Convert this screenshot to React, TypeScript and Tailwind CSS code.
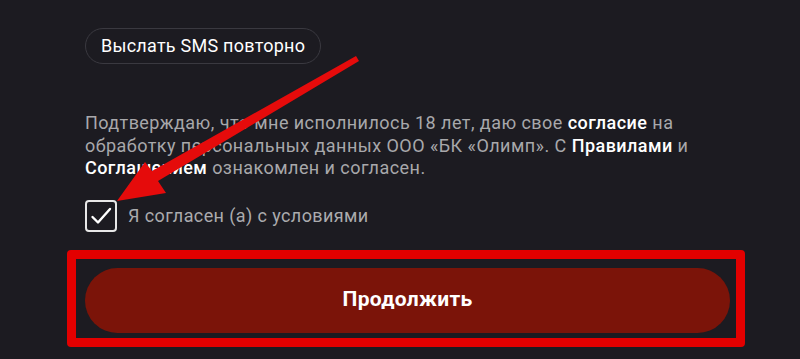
import React, { useState } from 'react';

// Tapered annotation arrow pointing at the checkbox
function AnnotationArrow() {
  return (
    <svg
      className="absolute inset-0 pointer-events-none"
      width="800"
      height="359"
      viewBox="0 0 800 359"
    >
      <polygon
        fill="#e50b0b"
        points="356,56 359,61 158,181 166,193 117,201 145,162 152,171"
      />
    </svg>
  );
}

export default function App() {
  const [agreed, setAgreed] = useState(true);

  return (
    <div className="relative w-full min-h-screen bg-[#1c1b21] font-['Roboto','Liberation_Sans',sans-serif] overflow-hidden">
      <div className="flex flex-col w-[645px] ml-[85px] pt-[28px]">
        <div>
          <button className="h-[36px] px-[15px] rounded-full border border-[#3a3940] text-white text-[18px] tracking-[0.25px] leading-none">
            Выслать SMS повторно
          </button>
        </div>

        <p className="mt-[48px] text-[18px] tracking-[0.45px] leading-[22.5px] text-[#a8a8ab]">
          Подтверждаю, что мне исполнилось 18 лет, даю свое{' '}
          <span className="text-white font-medium">согласие</span> на обработку персональных данных ООО «БК «Олимп». С{' '}
          <span className="text-white font-medium">Правилами</span> и{' '}
          <span className="text-white font-medium">Соглашением</span> ознакомлен и согласен.
        </p>

        <label className="flex items-center gap-[11px] mt-[20px] cursor-pointer">
          <span
            onClick={() => setAgreed(!agreed)}
            className="flex items-center justify-center w-[32px] h-[32px] rounded-[4px] border-2 border-[#e8e8e8]"
          >
            {agreed && (
              <svg width="24" height="24" viewBox="0 0 24 24" fill="none" stroke="white" strokeWidth="2.4" strokeLinecap="round" strokeLinejoin="round">
                <path d="M3.5 13l5.5 5.5L21 5" />
              </svg>
            )}
          </span>
          <span className="text-[18px] tracking-[0.4px] text-[#ababae]">Я согласен (а) с условиями</span>
        </label>

        <div className="relative mt-[36px]">
          <div className="absolute -left-[18px] -right-[15px] -top-[18px] -bottom-[14px] border-[9px] border-[#e30000] rounded-[4px] pointer-events-none" />
          <button className="w-full h-[65px] rounded-full bg-[#7b1409] text-white text-[21px] tracking-[0.3px] font-bold">
            Продолжить
          </button>
        </div>
      </div>

      <AnnotationArrow />
    </div>
  );
}
